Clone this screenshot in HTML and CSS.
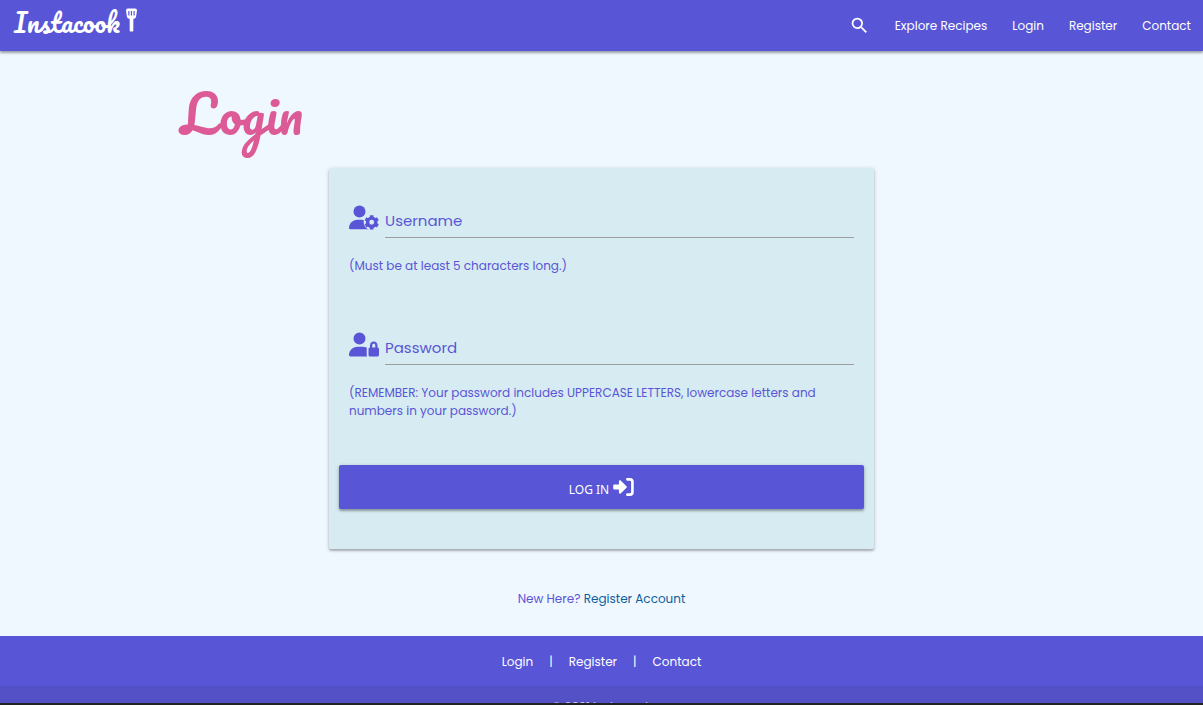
FILE: index.html
```html
<!DOCTYPE html>
<html lang="en">
<head>
<meta charset="utf-8">
<title>Instacook - Login</title>
<meta name="viewport" content="width=device-width, initial-scale=1">
<link rel="stylesheet" href="styles.css">
</head>
<body>
<header class="navbar">
  <a class="brand" href="#"><span>Instacook</span>
    <svg class="brand-icon" viewBox="0 0 12 26" aria-hidden="true"><path fill="currentColor" fill-rule="evenodd" d="M2 0h8q2 0 2 2l-1 7q-.4 2-2 2H8v13q0 1-1 1H5q-1 0-1-1V11H3q-1.600 0-2-2L0 2Q0 0 2 0zM2.500 2.500v5h1.300v-5zM5.300 2.500v5h1.300v-5zM8.200 2.500v5h1.300v-5z"/></svg>
  </a>
  <nav class="nav-links" aria-label="Main">
    <a href="#" aria-label="Search"><svg class="search-icon" viewBox="0 0 24 24" aria-hidden="true"><path fill="currentColor" d="M15.500 14h-.79l-.28-.27A6.470 6.470 0 0 0 16 9.500 6.500 6.500 0 1 0 9.500 16c1.610 0 3.090-.59 4.230-1.570l.27.28v.79l5 4.990L20.490 19l-4.990-5zm-6 0C7.010 14 5 11.990 5 9.500S7.010 5 9.500 5 14 7.010 14 9.500 11.990 14 9.500 14z"/></svg></a>
    <a href="#">Explore Recipes</a>
    <a href="#">Login</a>
    <a href="#">Register</a>
    <a href="#">Contact</a>
  </nav>
</header>
<main class="container">
  <h1 class="title">Login</h1>
  <form class="card">
    <div class="field">
      <div class="field-row">
        <svg class="field-icon" viewBox="0 0 640 512" aria-hidden="true"><defs><mask id="gear-gap"><path fill="#fff" d="M0 0h640v512H0z"/><circle cx="484" cy="352" r="172" fill="#000"/></mask></defs><circle cx="224" cy="128" r="128" fill="currentColor"/><path mask="url(#gear-gap)" fill="currentColor" d="M178 304h92c100 0 178 80 178 178 0 17-13 30-30 30H30c-17 0-30-13-30-30 0-98 80-178 178-178z"/><circle cx="484" cy="358" r="88" fill="none" stroke="currentColor" stroke-width="72"/><path d="M484 206v50M484 460v50M352 282l44 26M572 408l44 26M352 434l44-26M572 308l44-26" stroke="currentColor" stroke-width="76"/></svg>
        <input class="text-input" id="username" type="text" placeholder="Username" aria-label="Username" aria-describedby="username-help">
      </div>
      <p class="help" id="username-help">(Must be at least 5 characters long.)</p>
    </div>
    <div class="field">
      <div class="field-row">
        <svg class="field-icon" viewBox="0 0 640 512" aria-hidden="true"><path fill="currentColor" fill-rule="evenodd" d="M224 256a128 128 0 1 0 0-256 128 128 0 0 0 0 256zM178 304C80 304 0 384 0 482c0 17 13 30 30 30h356c-5-10-8-20-8-32V352c0-9 2-18 6-26-32-14-74-22-120-22zM528 192c-44 0-80 36-80 80v48c-18 0-32 14-32 32v128c0 18 14 32 32 32h160c18 0 32-14 32-32V352c0-18-14-32-32-32v-48c0-44-36-80-80-80zm0 48c18 0 32 14 32 32v48h-64v-48c0-18 14-32 32-32z"/></svg>
        <input class="text-input" id="password" type="password" placeholder="Password" aria-label="Password" aria-describedby="password-help">
      </div>
      <p class="help" id="password-help">(REMEMBER: Your password includes UPPERCASE LETTERS, lowercase letters and numbers in your password.)</p>
    </div>
    <button class="submit" type="submit"><span class="submit-label">LOG IN</span>
      <svg class="submit-icon" viewBox="0 0 512 448" aria-hidden="true"><path fill="currentColor" d="M330 204 192 66c-22-21-50-7-50 20v74H32c-18 0-32 14-32 32v64c0 18 14 32 32 32h110v74c0 27 28 41 50 20l138-138c13-12 13-28 0-40z"/><path d="M352 34h64q62 0 62 62v256q0 62-62 62h-64" fill="none" stroke="currentColor" stroke-width="66" stroke-linecap="round"/></svg>
    </button>
  </form>
  <p class="signup">New Here? <a href="#">Register Account</a></p>
</main>
<footer class="footer">
  <nav class="footer-links" aria-label="Footer"><a href="#">Login</a><span>|</span><a href="#">Register</a><span>|</span><a href="#">Contact</a></nav>
  <div class="copyright">© 2021 Instacook</div>
</footer>
</body>
</html>
```
FILE: styles.css
```css
* { box-sizing: border-box; }
body {
  margin: 0;
  height: 100vh;
  display: flex;
  flex-direction: column;
  overflow: hidden;
  background: #f0f8ff;
  color: #5a55d6;
  font: 12px/18px Poppins, Inter, sans-serif;
}
a { color: inherit; text-decoration: none; }
.navbar {
  display: flex;
  justify-content: space-between;
  align-items: center;
  flex: none;
  height: 51px;
  padding: 0 12px 0 14px;
  background: #5855d6;
  color: #fff;
  box-shadow: 0 2px 2px rgba(0, 0, 0, .25), 0 1px 4px rgba(0, 0, 0, .2);
}
.brand {
  display: flex;
  align-items: center;
  gap: 6px;
  padding-bottom: 8px;
  font: 26px/46px Pacifico, Lato, cursive;
}
.brand-icon { width: 11px; height: 25px; margin-bottom: 2px; }
.nav-links { display: flex; align-items: center; gap: 25px; }
.search-icon { display: block; width: 21px; height: 21px; }
.container { width: 70%; margin: 0 auto; flex: none; }
.title {
  margin: 27px 0 18px;
  font: 51px/72px Pacifico, Lato, cursive;
  color: #dc5a96;
}
.card {
  width: 65%;
  max-width: 545px;
  margin: 0 auto;
  padding: 29px 10px 40px;
  border-radius: 2px;
  background: #d6ecf2;
  box-shadow: 0 2px 2px rgba(0, 0, 0, .2), 0 1px 4px rgba(0, 0, 0, .2);
}
.field { padding: 0 10px; min-height: 127px; }
.field-row { display: flex; align-items: center; gap: 6px; }
.field-icon { width: 30px; height: 25px; flex: none; overflow: visible; }
.text-input {
  flex: 1;
  min-width: 0;
  height: 41px;
  padding: 6px 0 0;
  border: 0;
  border-bottom: 1px solid #9e9e9e;
  border-radius: 0;
  outline: 0;
  background: transparent;
  color: inherit;
  font: 15px Poppins, Inter, sans-serif;
}
.text-input::placeholder { color: inherit; opacity: 1; }
.help { margin: 19px 0 0; }
.submit {
  display: flex;
  align-items: center;
  justify-content: center;
  gap: 4px;
  width: 100%;
  height: 44px;
  margin-top: 14px;
  border: 0;
  border-radius: 2px;
  background: #5855d6;
  color: #fff;
  font: 12px "Noto Sans", sans-serif;
  box-shadow: 0 2px 2px rgba(0, 0, 0, .25), 0 1px 4px rgba(0, 0, 0, .2);
}
.submit-label { padding-top: 5px; }
.submit-icon { width: 21px; height: 18px; }
.signup { margin: 41px 0 28px; text-align: center; }
.signup a { color: #0f5f9c; }
.footer {
  flex: 1;
  min-height: 0;
  overflow: hidden;
  border-bottom: 2px solid #222;
  background: #5855d6;
  color: #fff;
}
.footer-links { display: flex; justify-content: center; gap: 16px; padding: 17px 0 15px; }
.copyright {
  height: 48px;
  padding-top: 12px;
  background: #5451c6;
  color: #cfcdf0;
  text-align: center;
}
```
